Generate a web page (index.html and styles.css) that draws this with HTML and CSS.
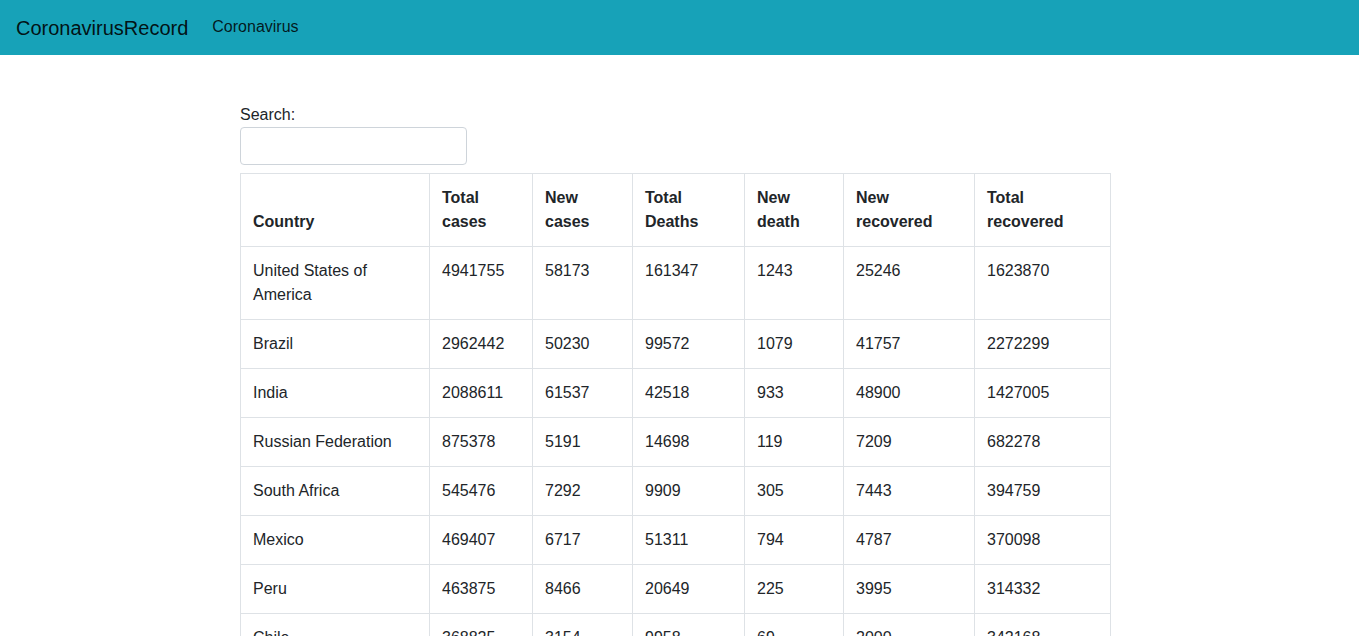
FILE: index.html
```html
<!DOCTYPE html>
<html lang="en">
<head>
<meta charset="utf-8">
<title>CoronavirusRecord</title>
<link rel="stylesheet" href="styles.css">
</head>
<body>
<nav class="navbar">
  <a class="brand" href="#">CoronavirusRecord</a>
  <a class="nav-link" href="#">Coronavirus</a>
</nav>
<main class="content">
  <label class="search-label" for="search">Search:</label>
  <input class="search-input" id="search" type="text">
  <table class="records">
    <colgroup>
      <col class="c1"><col class="c2"><col class="c3"><col class="c4"><col class="c5"><col class="c6"><col class="c7">
    </colgroup>
    <thead>
      <tr><th>Country</th><th>Total cases</th><th>New cases</th><th>Total Deaths</th><th>New death</th><th>New recovered</th><th>Total recovered</th></tr>
    </thead>
    <tbody>
      <tr><td>United States of America</td><td>4941755</td><td>58173</td><td>161347</td><td>1243</td><td>25246</td><td>1623870</td></tr>
      <tr><td>Brazil</td><td>2962442</td><td>50230</td><td>99572</td><td>1079</td><td>41757</td><td>2272299</td></tr>
      <tr><td>India</td><td>2088611</td><td>61537</td><td>42518</td><td>933</td><td>48900</td><td>1427005</td></tr>
      <tr><td>Russian Federation</td><td>875378</td><td>5191</td><td>14698</td><td>119</td><td>7209</td><td>682278</td></tr>
      <tr><td>South Africa</td><td>545476</td><td>7292</td><td>9909</td><td>305</td><td>7443</td><td>394759</td></tr>
      <tr><td>Mexico</td><td>469407</td><td>6717</td><td>51311</td><td>794</td><td>4787</td><td>370098</td></tr>
      <tr><td>Peru</td><td>463875</td><td>8466</td><td>20649</td><td>225</td><td>3995</td><td>314332</td></tr>
      <tr><td>Chile</td><td>368825</td><td>3154</td><td>9958</td><td>69</td><td>2000</td><td>342168</td></tr>
      <tr><td>Colombia</td><td>357710</td><td>10142</td><td>11939</td><td>389</td><td>8422</td><td>192355</td></tr>
      <tr><td>Spain</td><td>314362</td><td>0</td><td>28500</td><td>0</td><td>0</td><td>150376</td></tr>
      <tr><td>Iran</td><td>322567</td><td>2450</td><td>18132</td><td>174</td><td>2112</td><td>280041</td></tr>
      <tr><td>United Kingdom</td><td>308134</td><td>950</td><td>46413</td><td>49</td><td>0</td><td>1409</td></tr>
      <tr><td>Saudi Arabia</td><td>284226</td><td>1404</td><td>3055</td><td>35</td><td>1982</td><td>247089</td></tr>
      <tr><td>Pakistan</td><td>282645</td><td>770</td><td>6052</td><td>17</td><td>1013</td><td>259604</td></tr>
      <tr><td>Bangladesh</td><td>252502</td><td>2977</td><td>3333</td><td>27</td><td>2211</td><td>145584</td></tr>
      <tr><td>Italy</td><td>249204</td><td>552</td><td>35187</td><td>6</td><td>256</td><td>201323</td></tr>
      <tr><td>Turkey</td><td>237265</td><td>1178</td><td>5784</td><td>19</td><td>1008</td><td>220546</td></tr>
      <tr><td>Argentina</td><td>228195</td><td>7147</td><td>4251</td><td>145</td><td>2712</td><td>99852</td></tr>
      <tr><td>Germany</td><td>214214</td><td>1045</td><td>9175</td><td>7</td><td>520</td><td>196200</td></tr>
      <tr><td>France</td><td>195633</td><td>0</td><td>30312</td><td>0</td><td>0</td><td>82460</td></tr>
      <tr><td>Iraq</td><td>140603</td><td>3841</td><td>5161</td><td>67</td><td>2488</td><td>101025</td></tr>
      <tr><td>Philippines</td><td>119460</td><td>3462</td><td>2150</td><td>27</td><td>396</td><td>66270</td></tr>
    </tbody>
  </table>
</main>
</body>
</html>
```

FILE: styles.css
```css
html, body {
  margin: 0;
  padding: 0;
}
body {
  font-family: "Liberation Sans", Arial, sans-serif;
  font-size: 16px;
  line-height: 1.5;
  color: #212529;
  background: #fff;
}
.navbar {
  display: flex;
  align-items: center;
  height: 55px;
  padding: 0 16px;
  background: #17a2b8;
  box-sizing: border-box;
}
.brand {
  font-size: 20px;
  line-height: 30px;
  color: rgba(0, 0, 0, 0.9);
  text-decoration: none;
  margin-right: 16px;
}
.nav-link {
  font-size: 16px;
  line-height: 24px;
  padding: 0 8px;
  color: rgba(0, 0, 0, 0.85);
  text-decoration: none;
  position: relative;
  top: -1px;
}
.content {
  width: 870px;
  margin-left: 240px;
  padding-top: 48px;
  padding-bottom: 16px;
}
.search-label {
  display: block;
  line-height: 24px;
}
.search-input {
  display: block;
  box-sizing: border-box;
  width: 227px;
  height: 38px;
  margin: 0 0 8px;
  padding: 6px 12px;
  font: inherit;
  border: 1px solid #ced4da;
  border-radius: 4px;
  background: #fff;
}
.records {
  width: 870px;
  table-layout: fixed;
  border-collapse: collapse;
}
.records th,
.records td {
  border: 1px solid #dee2e6;
  padding: 12px;
  text-align: left;
  vertical-align: top;
  line-height: 24px;
}
.records th {
  font-weight: bold;
  vertical-align: bottom;
}
.c1 { width: 189px; }
.c2 { width: 103px; }
.c3 { width: 100px; }
.c4 { width: 112px; }
.c5 { width: 99px; }
.c6 { width: 131px; }
.c7 { width: 136px; }
```
